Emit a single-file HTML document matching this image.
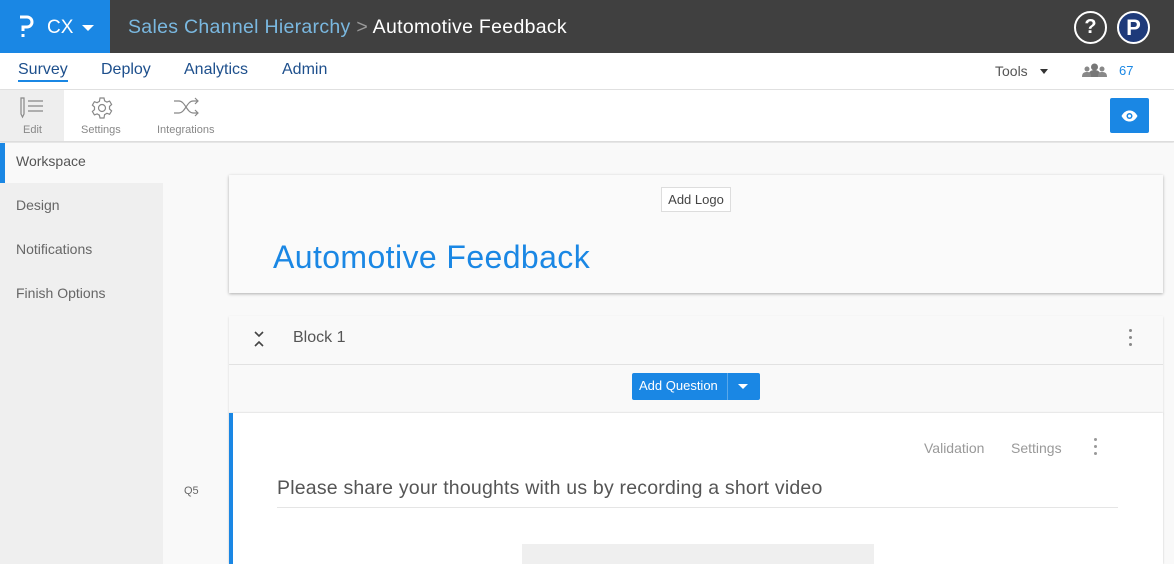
<!DOCTYPE html>
<html><head><meta charset="utf-8"><style>
*{box-sizing:border-box;margin:0;padding:0}
body{width:1174px;height:564px;overflow:hidden;font-family:"Liberation Sans",sans-serif;background:#f7f7f7;position:relative}
.a{position:absolute}
</style></head><body>
<div class="a" style="left:0;top:0;width:1174px;height:53px;background:#404040"></div>
<div class="a" style="left:0;top:0;width:110px;height:53px;background:#1a87e4"></div>
<svg class="a" style="left:17px;top:15px" width="18" height="24" viewBox="0 0 18 24" fill="none" stroke="#fff" stroke-width="3"><path d="M3 2h7a5 5 0 0 1 0 10H6v4"/><rect x="4.5" y="19" width="3" height="3" fill="#fff" stroke="none"/></svg>
<div class="a" style="left:47px;top:17px;color:#fff;font-size:19px">CX</div>
<div class="a" style="left:82px;top:25px;width:0;height:0;border-left:6px solid transparent;border-right:6px solid transparent;border-top:6px solid #fff"></div>
<div class="a" style="left:128px;top:16px;color:#7ab8e0;font-size:19.5px;white-space:nowrap;letter-spacing:.3px">Sales Channel Hierarchy <span style="color:#999">&gt;</span> <span style="color:#fff">Automotive Feedback</span></div>
<div class="a" style="left:1074px;top:11px;width:33px;height:33px;border:2px solid #fff;border-radius:50%;color:#fff;font-weight:bold;font-size:20px;text-align:center;line-height:29px">?</div>
<div class="a" style="left:1117px;top:11px;width:33px;height:33px;border:2px solid #fff;border-radius:50%;background:#1e3a7a;color:#fff;font-weight:bold;font-size:22px;text-align:center;line-height:29px">P</div>
<div class="a" style="left:0;top:53px;width:1174px;height:37px;background:#fff;border-bottom:1px solid #e2e2e2"></div>
<div class="a" style="left:18px;top:61px;color:#1d4f8c;font-size:16px;border-bottom:2px solid #1a87e4;padding-bottom:1px">Survey</div>
<div class="a" style="left:101px;top:61px;color:#1d4f8c;font-size:16px">Deploy</div>
<div class="a" style="left:184px;top:61px;color:#1d4f8c;font-size:16px">Analytics</div>
<div class="a" style="left:282px;top:61px;color:#1d4f8c;font-size:16px">Admin</div>
<div class="a" style="left:995px;top:63px;color:#555;font-size:14px">Tools</div>
<div class="a" style="left:1040px;top:69px;border-left:4px solid transparent;border-right:4px solid transparent;border-top:5px solid #333"></div>
<svg class="a" style="left:1082px;top:63px" width="25" height="14" viewBox="0 0 25 14"><circle cx="12.5" cy="4" r="3.5" fill="#777"/><path d="M6 14c0-5 3-7 6.5-7s6.5 2 6.5 7z" fill="#777"/><circle cx="5" cy="6" r="2.5" fill="#888"/><path d="M0 14c0-4 2-5 5-5s4 1 4 5z" fill="#888"/><circle cx="20" cy="6" r="2.5" fill="#888"/><path d="M16 14c0-4 1-5 4-5s5 1 5 5z" fill="#888"/></svg>
<div class="a" style="left:1119px;top:63px;color:#1a87e4;font-size:13px">67</div>
<div class="a" style="left:0;top:90px;width:1174px;height:52px;background:#fff;border-bottom:1px solid #ddd;box-shadow:0 1px 2px rgba(0,0,0,.1)"></div>
<div class="a" style="left:0;top:90px;width:64px;height:51px;background:#eeeeee"></div>
<svg class="a" style="left:19px;top:97px" width="26" height="22" viewBox="0 0 26 22" fill="none" stroke="#888" stroke-width="1.2"><path d="M2 1h3v16l-1.5 3-1.5-3z"/><path d="M9 4h15M9 9h15M9 14h15"/></svg>
<div class="a" style="left:23px;top:124px;color:#888;font-size:11px">Edit</div>
<svg class="a" style="left:90px;top:96px" width="24" height="24" viewBox="0 0 24 24" fill="none" stroke="#888" stroke-width="1.2"><path d="M10 2h4l.6 2.8 2.3 1.3 2.7-1 2 3.4-2.1 1.9v2.6l2.1 1.9-2 3.4-2.7-1-2.3 1.3L14 22h-4l-.6-2.8-2.3-1.3-2.7 1-2-3.4 2.1-1.9v-2.6L2.4 9.1l2-3.4 2.7 1 2.3-1.3z"/><circle cx="12" cy="12" r="3.5"/></svg>
<div class="a" style="left:81px;top:124px;color:#888;font-size:11px">Settings</div>
<svg class="a" style="left:173px;top:97px" width="28" height="20" viewBox="0 0 28 20" fill="none" stroke="#888" stroke-width="1.2"><path d="M1 4h5c6 0 8 12 14 12h5M1 16h5c6 0 8-12 14-12h5M22 1l3 3-3 3M22 13l3 3-3 3"/></svg>
<div class="a" style="left:157px;top:124px;color:#888;font-size:11px">Integrations</div>
<div class="a" style="left:1110px;top:98px;width:39px;height:35px;background:#1a87e4;border-radius:2px"></div>
<svg class="a" style="left:1121px;top:110px" width="17" height="12" viewBox="0 0 17 12"><path d="M0.5 6C3 1.5 6 .5 8.5.5S14 1.5 16.5 6C14 10.5 11 11.5 8.5 11.5S3 10.5.5 6z" fill="#fff"/><circle cx="8.5" cy="6" r="3" fill="#1a87e4"/><circle cx="8.5" cy="6" r="1.5" fill="#fff"/></svg>
<div class="a" style="left:0;top:143px;width:163px;height:421px;background:#efefef"></div>
<div class="a" style="left:0;top:143px;width:163px;height:40px;background:#f9f9f9"></div>
<div class="a" style="left:0;top:143px;width:5px;height:40px;background:#1a87e4"></div>
<div class="a" style="left:16px;top:153px;color:#555;font-size:14px">Workspace</div>
<div class="a" style="left:16px;top:197px;color:#666;font-size:14px">Design</div>
<div class="a" style="left:16px;top:241px;color:#666;font-size:14px">Notifications</div>
<div class="a" style="left:16px;top:285px;color:#666;font-size:14px">Finish Options</div>
<div class="a" style="left:163px;top:143px;width:1011px;height:421px;background:#f9f9f9"></div>
<div class="a" style="left:229px;top:175px;width:934px;height:118px;background:#fafafa;box-shadow:0 1px 3px rgba(0,0,0,.3)"></div>
<div class="a" style="left:661px;top:187px;width:70px;height:25px;border:1px solid #ddd;background:#fff;color:#444;font-size:13px;text-align:center;line-height:23px">Add Logo</div>
<div class="a" style="left:273px;top:239px;color:#1a87e4;font-size:32px;white-space:nowrap;letter-spacing:.4px">Automotive Feedback</div>
<div class="a" style="left:229px;top:316px;width:934px;height:97px;background:#f9f9f9;box-shadow:0 1px 2px rgba(0,0,0,.15)"></div>
<div class="a" style="left:229px;top:364px;width:934px;height:1px;background:#e2e2e2"></div>
<svg class="a" style="left:253px;top:331px" width="12" height="16" viewBox="0 0 12 16" fill="none" stroke="#444" stroke-width="1.6"><path d="M2 1l4 4 4-4M2 15l4-4 4 4"/></svg>
<div class="a" style="left:293px;top:329px;color:#555;font-size:16px">Block 1</div>
<div class="a" style="left:1129px;top:329px;width:3px;height:3px;background:#888;border-radius:50%;box-shadow:0 7px 0 #888,0 14px 0 #888"></div>
<div class="a" style="left:632px;top:373px;width:128px;height:27px;background:#1a87e4;border-radius:2px"></div>
<div class="a" style="left:727px;top:373px;width:1px;height:27px;background:#5aa8ea"></div>
<div class="a" style="left:639px;top:378px;color:#fff;font-size:13px">Add Question</div>
<div class="a" style="left:738px;top:384px;border-left:5px solid transparent;border-right:5px solid transparent;border-top:5px solid #fff"></div>
<div class="a" style="left:229px;top:413px;width:934px;height:151px;background:#fff;border-left:4px solid #1a87e4;box-shadow:0 0 2px rgba(0,0,0,.2)"></div>
<div class="a" style="left:924px;top:440px;color:#999;font-size:14px">Validation</div>
<div class="a" style="left:1011px;top:440px;color:#999;font-size:14px">Settings</div>
<div class="a" style="left:1094px;top:438px;width:3px;height:3px;background:#999;border-radius:50%;box-shadow:0 7px 0 #999,0 14px 0 #999"></div>
<div class="a" style="left:184px;top:485px;color:#666;font-size:11px">Q5</div>
<div class="a" style="left:277px;top:477px;color:#555;font-size:19.5px;white-space:nowrap;letter-spacing:.2px">Please share your thoughts with us by recording a short video</div>
<div class="a" style="left:277px;top:507px;width:841px;height:1px;background:#e5e5e5"></div>
<div class="a" style="left:522px;top:544px;width:352px;height:20px;background:#efefef"></div>
</body></html>
